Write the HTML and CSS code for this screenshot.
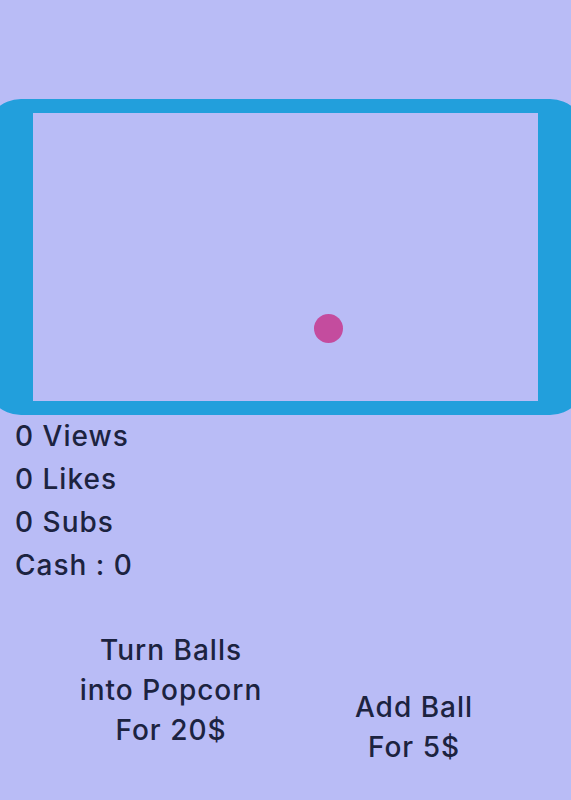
FILE: index.html
```html
<!DOCTYPE html>
<html>

<head>
  <meta charset="UTF-8">
  <title>Ball Tube</title>
  <link rel="stylesheet" href="styles.css">
</head>

<body>
  <div class="screen">
    <div class="arena">
      <div class="ball" style="left: 281px; top: 201px;"></div>
    </div>
  </div>

  <div class="stats">
    <div class="stat">0 Views</div>
    <div class="stat">0 Likes</div>
    <div class="stat">0 Subs</div>
    <div class="stat">Cash : 0</div>
  </div>

  <div class="shop">
    <div class="buy popcorn">Turn Balls<br>into Popcorn<br>For 20$</div>
    <div class="buy add-ball">Add Ball<br>For 5$</div>
  </div>
</body>

</html>
```

FILE: styles.css
```css
body {
  margin: 0;
  background-color: rgb(185, 188, 246);
  font-family: "Inter", "Noto Sans", sans-serif;
  font-weight: 500;
  letter-spacing: 1px;
  color: #1c2340;
  overflow: hidden;
}

.screen {
  box-sizing: border-box;
  width: 601px;
  height: 316px;
  margin-top: 99px;
  margin-left: -15px;
  border-style: solid;
  border-color: rgb(34, 159, 220);
  border-width: 14px 48px;
  border-radius: 36px;
}

.arena {
  position: relative;
  width: 100%;
  height: 100%;
}

.ball {
  position: absolute;
  width: 29px;
  height: 29px;
  border-radius: 50%;
  background-color: rgb(196, 76, 158);
}

.stats {
  padding-left: 15px;
  font-size: 28px;
  line-height: 43px;
}

.shop {
  display: flex;
  align-items: flex-start;
  gap: 23px;
  padding-left: 61px;
  margin-top: 43px;
  font-size: 28px;
  line-height: 40px;
  text-align: center;
}

.buy {
  width: 220px;
}

.add-ball {
  margin-top: 57px;
}
```
